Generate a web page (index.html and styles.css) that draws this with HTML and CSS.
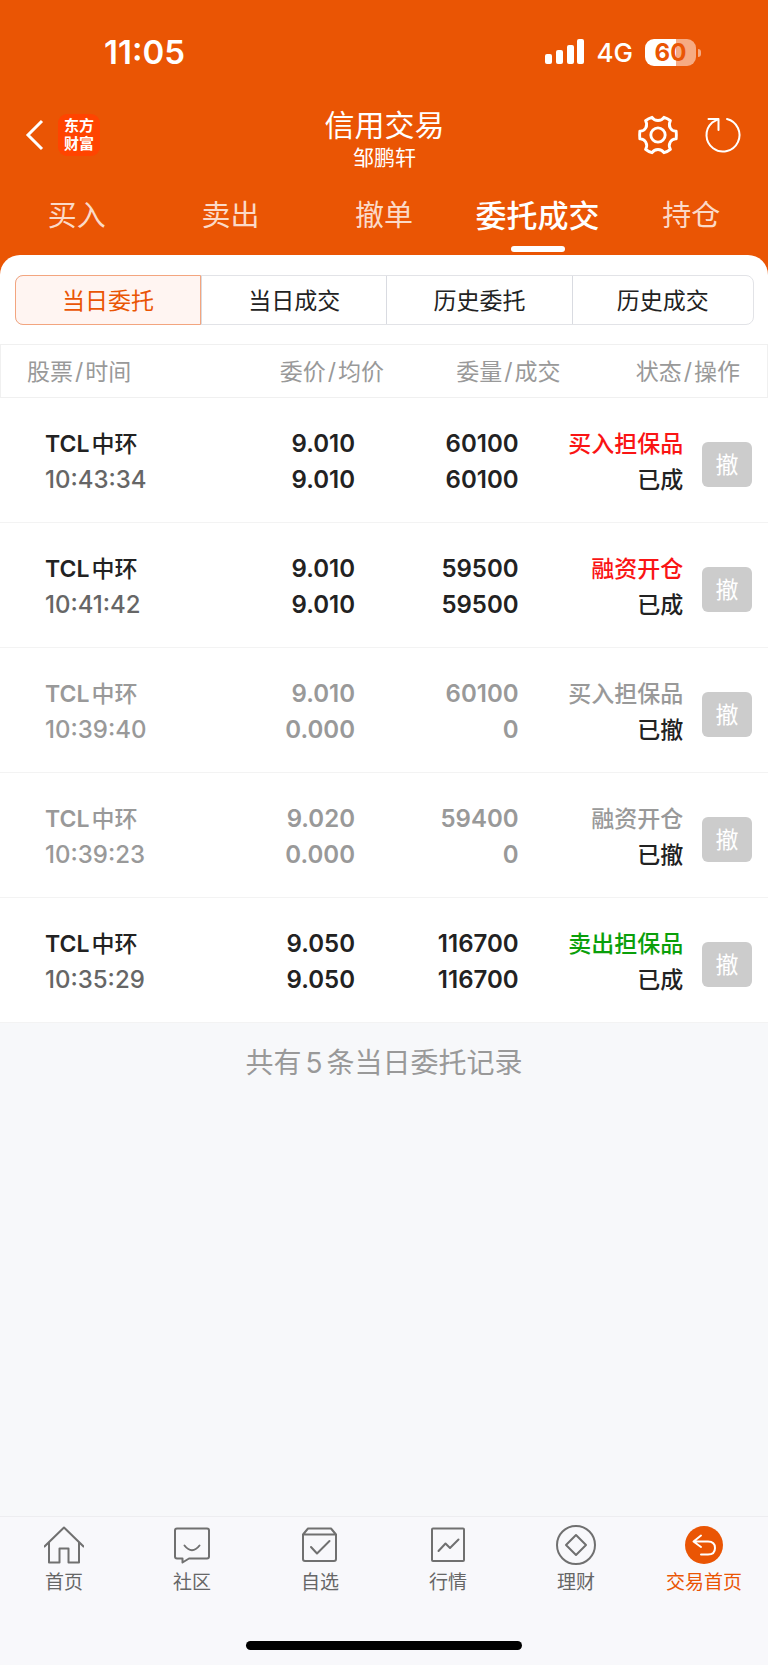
FILE: index.html
```
<!DOCTYPE html>
<html lang="zh-CN">
<head>
<meta charset="utf-8">
<meta name="viewport" content="width=device-width, initial-scale=1">
<title>信用交易</title>
<link rel="stylesheet" href="styles.css">
</head>
<body>
<header class="top">
  <div class="status-bar">
    <time class="clock">11:05</time>
    <div class="status-right">
      <svg class="signal" viewBox="0 0 40 26" aria-hidden="true"><rect x="0" y="15" width="7" height="10" rx="2"/><rect x="11" y="11" width="7" height="14" rx="2"/><rect x="22" y="6" width="7" height="19" rx="2"/><rect x="32" y="0" width="7" height="25" rx="2"/></svg>
      <span class="network">4G</span>
      <span class="battery"><span class="battery-level">60</span></span>
    </div>
  </div>
  <div class="title-bar">
    <div class="title-left">
      <button class="icon-button" aria-label="返回"><svg class="back" viewBox="0 0 20 32"><path d="M18 2 4 16l14 14"/></svg></button>
      <span class="logo"><span>东方</span><span>财富</span></span>
    </div>
    <div class="heading">
      <h1>信用交易</h1>
      <p>邹鹏轩</p>
    </div>
    <div class="title-right">
      <button class="icon-button" aria-label="设置"><svg class="tool gear" viewBox="-23 -23 46 46"><path d="M19 -4Q19.400 0 19 4C13.400 3.700 10 9.800 13 15Q10 17.500 6.300 18.500C3.500 14 -3.500 14 -6.300 18.500Q-10 17.500 -13 15C-10 9.800 -13.400 3.700 -19 4Q-19.400 0 -19 -4C-13.400 -3.700 -10 -9.800 -13 -15Q-10 -17.500 -6.300 -18.500C-3.500 -14 3.500 -14 6.300 -18.500Q10 -17.500 13 -15C10 -9.800 13.400 -3.700 19 -4Z"/><circle r="7.500"/></svg></button>
      <button class="icon-button" aria-label="刷新"><svg class="tool" viewBox="-22 -22 44 44"><path d="M4 -16A16.500 16.500 0 1 1 -11 -12.300L-4.500 -16M-14.500 -16H-4.500V-5"/></svg></button>
    </div>
  </div>
  <nav class="tabs">
    <a href="#buy">买入</a>
    <a href="#sell">卖出</a>
    <a href="#cancel">撤单</a>
    <a href="#orders" class="active" aria-current="page">委托成交</a>
    <a href="#positions">持仓</a>
  </nav>
</header>
<main class="content">
  <section class="panel">
    <div class="segments">
      <button class="selected">当日委托</button>
      <button>当日成交</button>
      <button>历史委托</button>
      <button>历史成交</button>
    </div>
    <table class="orders">
      <colgroup><col class="col-name"><col class="col-price"><col class="col-amount"><col class="col-state"><col class="col-action"></colgroup>
      <thead>
        <tr><th>股票<i>/</i>时间</th><th>委价<i>/</i>均价</th><th>委量<i>/</i>成交</th><th colspan="2">状态<i>/</i>操作</th></tr>
      </thead>
      <tbody>
        <tr><td><span class="latin">TCL</span>中环<br><span class="time">10:43:34</span></td><td>9.010<br>9.010</td><td>60100<br>60100</td><td><span class="buy">买入担保品</span><br>已成</td><td><button class="cancel" disabled>撤</button></td></tr>
        <tr><td><span class="latin">TCL</span>中环<br><span class="time">10:41:42</span></td><td>9.010<br>9.010</td><td>59500<br>59500</td><td><span class="buy">融资开仓</span><br>已成</td><td><button class="cancel" disabled>撤</button></td></tr>
        <tr class="void"><td><span class="latin">TCL</span>中环<br><span class="time">10:39:40</span></td><td>9.010<br>0.000</td><td>60100<br>0</td><td>买入担保品<br><span class="state">已撤</span></td><td><button class="cancel" disabled>撤</button></td></tr>
        <tr class="void"><td><span class="latin">TCL</span>中环<br><span class="time">10:39:23</span></td><td>9.020<br>0.000</td><td>59400<br>0</td><td>融资开仓<br><span class="state">已撤</span></td><td><button class="cancel" disabled>撤</button></td></tr>
        <tr><td><span class="latin">TCL</span>中环<br><span class="time">10:35:29</span></td><td>9.050<br>9.050</td><td>116700<br>116700</td><td><span class="sell">卖出担保品</span><br>已成</td><td><button class="cancel" disabled>撤</button></td></tr>
      </tbody>
    </table>
  </section>
  <p class="summary">共有<span class="count">5</span>条当日委托记录</p>
</main>
<footer class="bottom">
  <nav class="dock">
    <a href="#home"><svg viewBox="0 0 40 40"><path d="M0.500 21.500 20 2.500 39.500 21.500M5 18V37.500H15.500V23.500H24.500V37.500H35V18"/></svg>首页</a>
    <a href="#community"><svg viewBox="0 0 40 40"><path d="M5 3.500H35Q37 3.500 37 5.500V31.500Q37 33.500 35 33.500H17L10.500 37.500V33.500H5Q3 33.500 3 31.500V5.500Q3 3.500 5 3.500ZM12.500 20.500Q20 30 27.500 20.500"/></svg>社区</a>
    <a href="#watchlist"><svg viewBox="0 0 40 40"><path d="M3 9.500V34Q3 36 5 36H34Q36 36 36 34V9.500ZM3 9.500 8 3.500H31L36 9.500M11 22 17 28.500 29.500 16"/></svg>自选</a>
    <a href="#market"><svg viewBox="0 0 40 40"><rect x="4" y="3.500" width="32" height="32.500" rx="1"/><path d="M10.500 26 17.500 18.500 22 23 30.500 14.500"/></svg>行情</a>
    <a href="#wealth"><svg viewBox="0 0 40 40"><circle cx="20" cy="20" r="19"/><path d="M20 10 30 20 20 30 10 20Z"/></svg>理财</a>
    <a href="#trade" class="active" aria-current="page"><svg viewBox="0 0 40 40"><circle class="disc" cx="20" cy="20" r="19"/><path class="arrow" d="M17 10.500 9.500 16.500 17 22M10 16.500H24Q31 16.500 31 23Q31 29.500 24 29.500H17"/></svg>交易首页</a>
  </nav>
  <div class="home-bar"></div>
</footer>
</body>
</html>
```
FILE: styles.css
```
* { box-sizing: border-box; }
body {
  margin: 0;
  min-height: 100vh;
  display: flex;
  flex-direction: column;
  background: #f7f8fa;
  color: #222;
  font-family: Inter, "Noto Sans CJK SC", sans-serif;
}
h1, p { margin: 0; font-weight: 400; }
a { color: inherit; text-decoration: none; }
button { font: inherit; color: inherit; background: none; border: 0; padding: 0; margin: 0; }
svg { display: block; fill: none; stroke-linecap: round; stroke-linejoin: round; }

.top { background: #ea5504; color: #fff; padding-bottom: 22px; }
.status-bar {
  height: 104px;
  padding: 0 67px 0 104px;
  display: flex;
  align-items: center;
  justify-content: space-between;
}
.clock { font-size: 33px; font-weight: 600; }
.status-right { display: flex; align-items: center; gap: 12px; }
.signal { width: 40px; height: 26px; fill: #fff; }
.network { font-size: 26px; font-weight: 500; }
.battery { position: relative; margin-right: 5px; }
.battery-level {
  display: block;
  width: 51px;
  height: 27px;
  border-radius: 9px;
  background: linear-gradient(90deg, #fff 60%, #f6ab83 60%);
  color: #ea5504;
  font-size: 24px;
  font-weight: 700;
  line-height: 27px;
  text-align: center;
}
.battery::after {
  content: "";
  position: absolute;
  right: -5px;
  top: 10px;
  width: 3px;
  height: 8px;
  border-radius: 0 4px 4px 0;
  background: #f6ab83;
}

.title-bar {
  height: 74px;
  padding: 0 23px 0 24px;
  display: grid;
  grid-template-columns: 1fr auto 1fr;
  align-items: center;
}
.title-left { display: flex; align-items: center; gap: 14px; padding-bottom: 12px; }
.back { width: 20px; height: 32px; stroke: #fff; stroke-width: 3; stroke-linecap: butt; stroke-linejoin: miter; }
.logo {
  display: flex;
  flex-direction: column;
  justify-content: center;
  width: 42px;
  height: 42px;
  border-radius: 9px;
  background: #ff4400;
  font-size: 15px;
  font-weight: 700;
  line-height: 18px;
  text-align: center;
}
.heading { padding-bottom: 2px; text-align: center; }
.heading h1 { font-size: 30px; line-height: 36px; }
.heading p { font-size: 21px; line-height: 30px; }
.title-right { display: flex; justify-content: flex-end; gap: 21px; padding-bottom: 12px; }
.tool { width: 44px; height: 44px; stroke: #fff; stroke-width: 2; }
.gear { stroke-width: 3; }

.tabs { display: grid; grid-template-columns: repeat(5, 1fr); height: 75px; }
.tabs a {
  position: relative;
  font-size: 29px;
  line-height: 75px;
  text-align: center;
  white-space: nowrap;
  color: #fbdac8;
}
.tabs .active { font-size: 31px; font-weight: 500; color: #fff; }
.tabs .active::after {
  content: "";
  position: absolute;
  left: 50%;
  bottom: 1px;
  width: 54px;
  height: 6px;
  margin-left: -27px;
  border-radius: 3px;
  background: #fff;
}

.content { flex: 1; }
.panel {
  position: relative;
  margin-top: -20px;
  padding-top: 20px;
  border-radius: 20px 20px 0 0;
  background: #fff;
}
.segments {
  display: grid;
  grid-template-columns: 50fr 50fr 50fr 49fr;
  height: 50px;
  margin: 0 14px 19px 15px;
  border: 1px solid #e2e3e7;
  border-radius: 8px;
}
.segments button { padding-bottom: 2px; font-size: 23px; border-left: 1px solid #d9dbe1; }
.segments .selected {
  margin: -1px 0 -1px -1px;
  border: 1px solid #f3a57f;
  border-radius: 8px 0 0 8px;
  background: #fff5f2;
  color: #ea5504;
}

.orders { width: 100%; table-layout: fixed; border-collapse: separate; border-spacing: 0; }
.col-name { width: 26%; }
.col-price { width: 24%; }
.col-amount { width: 23%; }
.col-state { width: 17%; }
.col-action { width: 10%; }
.orders th {
  height: 54px;
  padding: 0 0 2px;
  border: solid #f0f0f0;
  border-width: 1px 0;
  color: #999;
  font-size: 23px;
  font-weight: 400;
  text-align: right;
  white-space: nowrap;
}
.orders th:first-child { padding-left: 26px; border-left-width: 1px; text-align: left; }
.orders th:last-child { padding-right: 27px; border-right-width: 1px; }
.orders i { font-style: normal; padding: 0 2px; }
.orders td {
  height: 125px;
  padding: 28px 0 24px;
  border-bottom: 1px solid #f3f3f3;
  font-size: 23px;
  font-weight: 500;
  line-height: 36px;
  text-align: right;
  white-space: nowrap;
}
.orders td:nth-child(1) { padding-left: 45px; text-align: left; }
.orders td:nth-child(2) { padding-right: 29px; }
.orders td:nth-child(3) { padding-right: 42px; }
.orders td:nth-child(4) { padding-right: 8px; }
.orders td:nth-child(5) { padding-right: 16px; }
.orders td:nth-child(2), .orders td:nth-child(3) { font-size: 24px; font-weight: 600; }
.latin { padding-right: 2px; font-weight: 600; }
.time { color: #666; font-size: 24px; }
.buy { color: #fa1414; }
.sell { color: #0a9f0a; }
.orders .void td, .void .time { color: #999; }
.orders .void .state { color: #222; }
.cancel {
  width: 50px;
  height: 45px;
  margin-top: 5px;
  border-radius: 6px;
  background: #ccc;
  color: #fff;
  font-size: 23px;
  font-weight: 400;
  vertical-align: middle;
}
.summary { padding: 20px 0; color: #999; font-size: 28px; line-height: 40px; text-align: center; }
.count { padding: 0 4px; }

.bottom { border-top: 1px solid #ededf0; background: #f8f8fb; padding: 8px 0 15px; }
.dock { display: grid; grid-template-columns: repeat(6, 1fr); }
.dock a {
  display: flex;
  flex-direction: column;
  align-items: center;
  gap: 4px;
  color: #666;
  font-size: 19px;
  line-height: 28px;
  white-space: nowrap;
}
.dock svg { width: 40px; height: 40px; stroke: #707070; stroke-width: 2; }
.dock .active { color: #ea5504; }
.dock .disc { fill: #ea5504; stroke: none; }
.dock .arrow { stroke: #fff; }
.home-bar { width: 36%; height: 9px; margin: 44px auto 0; border-radius: 5px; background: #000; }
```
